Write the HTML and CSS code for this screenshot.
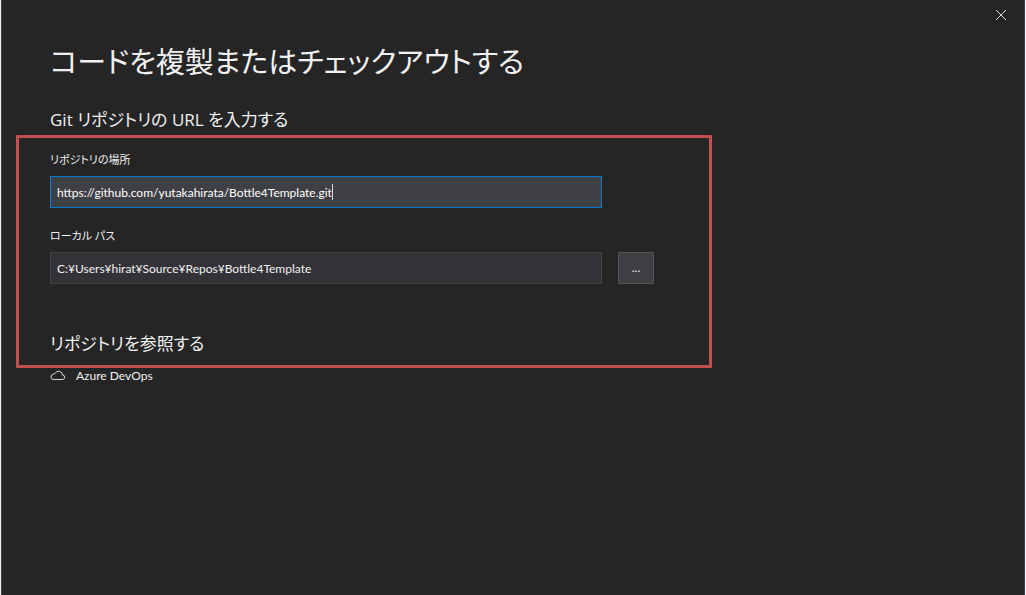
FILE: index.html
```html
<!DOCTYPE html>
<html lang="ja">
<head>
<meta charset="utf-8">
<title>コードを複製またはチェックアウトする</title>
<link rel="stylesheet" href="styles.css">
</head>
<body>
<main class="dialog">
  <button class="close" type="button" aria-label="閉じる">
    <svg width="12" height="12" viewBox="0 0 12 12"><path d="M1 1L11 11M11 1L1 11"/></svg>
  </button>
  <h1 class="title">コードを複製またはチェックアウトする</h1>
  <h2 class="heading">Git リポジトリの URL を入力する</h2>
  <form class="form">
    <div class="field">
      <label class="label" for="url">リポジトリの場所</label>
      <div class="row">
        <div class="control">
          <input class="input input-active" id="url" type="text" value="https://github.com/yutakahirata/Bottle4Template.git">
          <span class="caret"></span>
        </div>
      </div>
    </div>
    <div class="field">
      <label class="label" for="path">ローカル パス</label>
      <div class="row">
        <div class="control">
          <input class="input" id="path" type="text" value="C:¥Users¥hirat¥Source¥Repos¥Bottle4Template">
        </div>
        <button class="browse" type="button">...</button>
      </div>
    </div>
  </form>
  <h2 class="heading heading-browse">リポジトリを参照する</h2>
  <a class="provider" href="#">
    <svg class="cloud" width="16" height="12" viewBox="0 0 16 12"><path d="M4 9.5H12.4A2.2 2.2 0 0 0 12.6 5.1A4 4 0 0 0 5 3.5A2.6 2.6 0 0 0 3.2 4.3A2.6 2.6 0 0 0 4 9.5Z"/></svg>
    <span>Azure DevOps</span>
  </a>
  <div class="highlight"></div>
</main>
</body>
</html>
```
FILE: styles.css
```css
* {
  box-sizing: border-box;
}

body {
  margin: 0;
  padding: 0 1px;
  background: #eeeef6;
  color: #f1f1f1;
  font: 12px/16px Lato, "Noto Sans CJK JP", sans-serif;
  font-feature-settings: "palt";
}

.dialog {
  position: relative;
  min-height: 100vh;
  padding: 40px 48px 32px;
  border: solid #3f3f46;
  border-width: 0 1px;
  background: #252526;
}

.close {
  position: absolute;
  top: 8px;
  right: 16px;
  display: flex;
  padding: 1px;
  border: 0;
  background: none;
}

.close svg,
.cloud {
  fill: none;
  stroke: #d8d8d8;
  stroke-width: 1;
}

.title {
  margin: 0;
  font-size: 29px;
  font-weight: 400;
  line-height: 44px;
}

.heading {
  margin: 24px 0 0;
  font-family: "Open Sans", "Noto Sans CJK JP", sans-serif;
  font-size: 17px;
  font-weight: 400;
  line-height: 24px;
}

.form {
  display: flex;
  flex-direction: column;
  gap: 20px;
  margin-top: 20px;
}

.field {
  display: flex;
  flex-direction: column;
  gap: 8px;
}

.label {
  font-size: 11px;
}

.row {
  display: flex;
  gap: 16px;
}

.control {
  position: relative;
  flex: 0 1 552px;
}

.input {
  display: block;
  width: 100%;
  height: 32px;
  padding: 0 6px;
  border: 1px solid #434346;
  outline: 0;
  background: #333337;
  color: #f1f1f1;
  font: inherit;
}

.input-active {
  border-color: #007acc;
  background: #3f3f46;
  color: #fff;
}

.caret {
  position: absolute;
  top: 8px;
  left: 282px;
  width: 1px;
  height: 16px;
  background: #d8d8d8;
}

.browse {
  width: 36px;
  height: 32px;
  padding: 0;
  border: 1px solid #555;
  background: #3f3f46;
  color: #f1f1f1;
  font: inherit;
}

.heading-browse {
  margin-top: 48px;
}

.provider {
  display: inline-flex;
  align-items: center;
  gap: 10px;
  margin-top: 12px;
  color: #f1f1f1;
  text-decoration: none;
}

.highlight {
  position: absolute;
  top: 135px;
  left: 14px;
  width: 696px;
  height: 233px;
  border: 3px solid #c0504d;
  border-radius: 1px;
  pointer-events: none;
}
```
